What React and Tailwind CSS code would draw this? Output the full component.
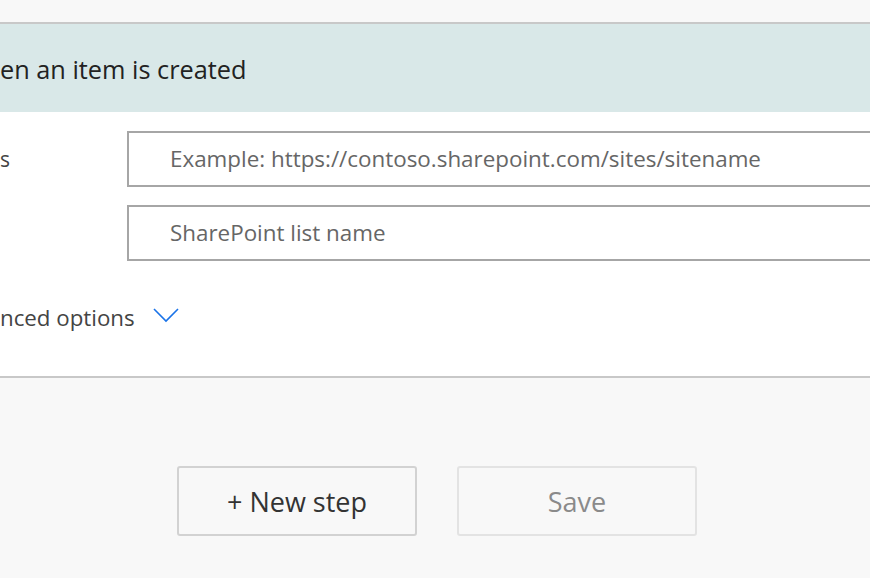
export default function App() {
  const font = { fontFamily: '"Open Sans", "Noto Sans", sans-serif' };
  return (
    <div className="w-[870px] h-[578px] overflow-hidden bg-[#f8f8f8] flex flex-col" style={font}>
      <div className="h-[22px] shrink-0 bg-[#f8f8f8]" />
      <div className="h-[2px] shrink-0 bg-[#c8c8c8]" />
      <div className="h-[88px] shrink-0 bg-[#d9e8e8] flex items-center pt-[3px]">
        <span className="text-[25.3px] text-[#222] leading-none whitespace-nowrap">en an item is created</span>
      </div>
      <div className="bg-white h-[264px] shrink-0 flex flex-col">
        <div className="flex items-center mt-[19px] h-[56px]">
          <span className="w-[127px] shrink-0 text-[21px] text-[#444] leading-none">s</span>
          <div className="flex-1 h-[56px] border-2 border-r-0 border-[#a6a6a6] flex items-center pl-[41px]">
            <span className="text-[22.4px] text-[#666] whitespace-nowrap">Example: https://contoso.sharepoint.com/sites/sitename</span>
          </div>
        </div>
        <div className="flex items-center mt-[18px] h-[56px]">
          <span className="w-[127px] shrink-0" />
          <div className="flex-1 h-[56px] border-2 border-r-0 border-[#a6a6a6] flex items-center pl-[41px]">
            <span className="text-[22.4px] text-[#666] whitespace-nowrap">SharePoint list name</span>
          </div>
        </div>
        <div className="flex items-center mt-[46px] gap-[18px]">
          <span className="text-[22.3px] text-[#444] whitespace-nowrap leading-none">nced options</span>
          <svg width="26" height="16" viewBox="0 0 26 16" fill="none" className="-mt-[6px]">
            <path d="M1 2 L13 14 L25 2" stroke="#1a73e8" strokeWidth="1.6" />
          </svg>
        </div>
      </div>
      <div className="h-[2px] shrink-0 bg-[#c8c8c8]" />
      <div className="flex-1 flex items-start pl-[177px] pt-[88px] gap-[40px]">
        <div className="w-[240px] h-[70px] border-2 border-[#d2d2d2] rounded-[3px] flex items-center justify-center pt-[3px] text-[27px] text-[#333]">
          + New step
        </div>
        <div className="w-[240px] h-[70px] border-2 border-[#e3e3e3] rounded-[3px] flex items-center justify-center pt-[3px] text-[27px] text-[#8a8a8a]">
          Save
        </div>
      </div>
    </div>
  );
}
